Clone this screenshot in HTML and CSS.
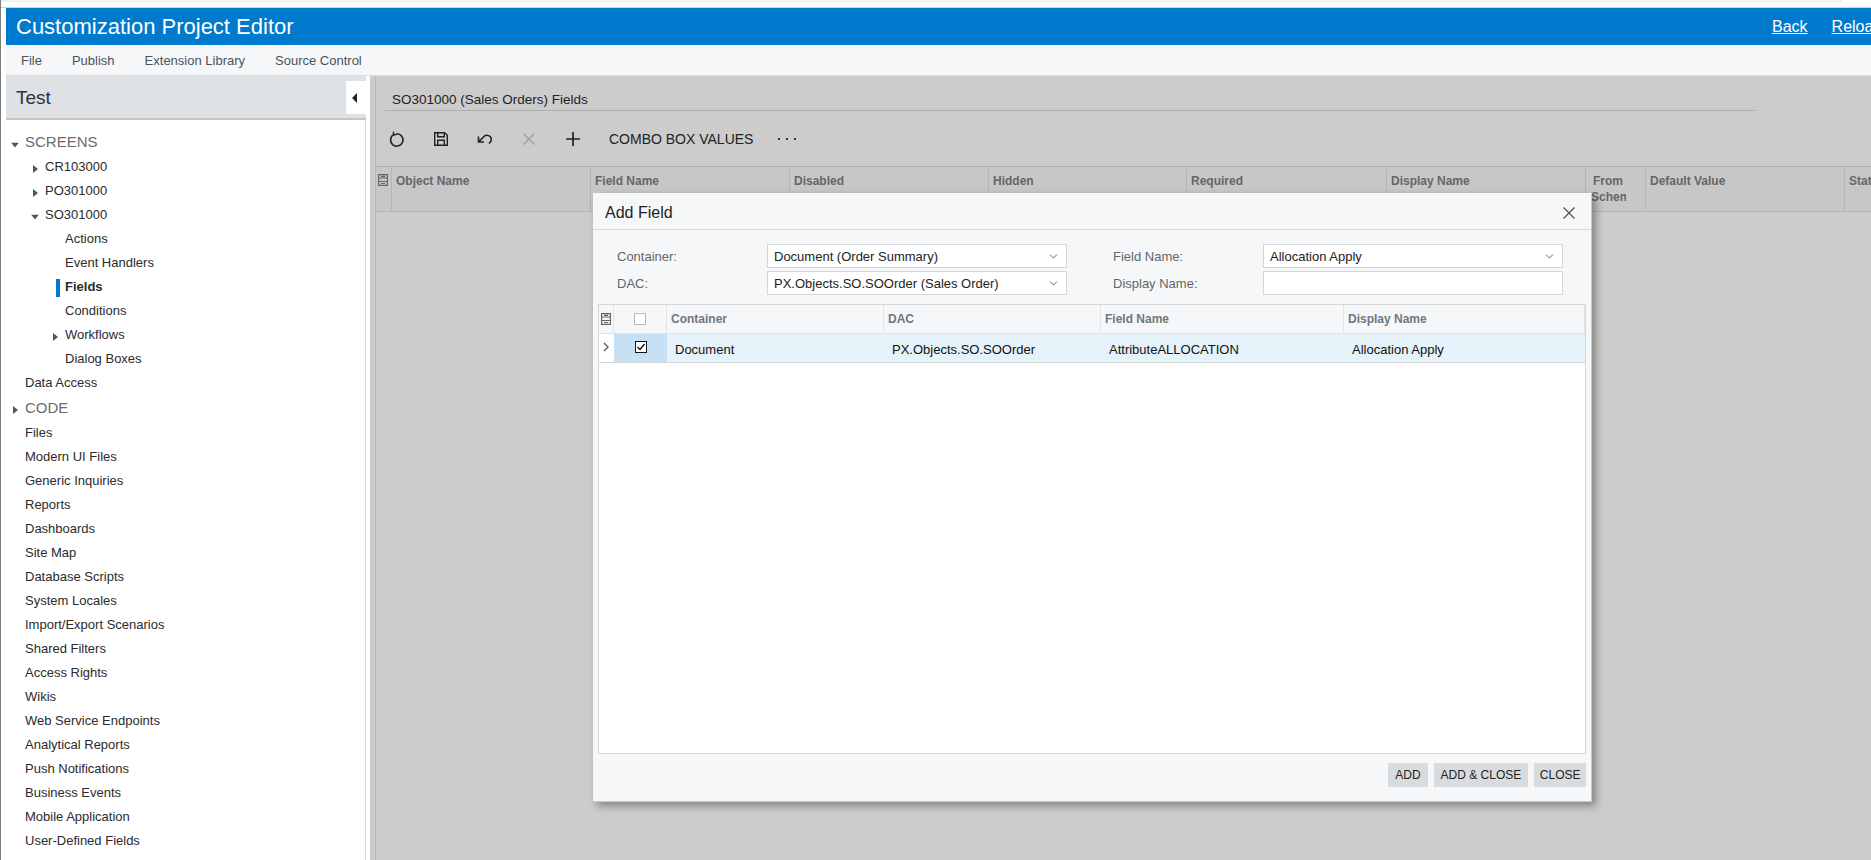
FILE: index.html
```html
<!DOCTYPE html>
<html lang="en">
<head>
<meta charset="utf-8">
<title>Customization Project Editor</title>
<link rel="stylesheet" href="styles.css">
</head>
<body>
<div class="chrome-top"></div>
<div class="page">
  <header class="topbar">
    <h1 class="app-title">Customization Project Editor</h1>
    <nav class="top-links"><a class="top-link">Back</a><a class="top-link">Reload</a></nav>
  </header>
  <nav class="menubar">
    <span class="menu-item">File</span>
    <span class="menu-item">Publish</span>
    <span class="menu-item">Extension Library</span>
    <span class="menu-item">Source Control</span>
  </nav>
  <div class="workspace">
    <aside class="sidebar">
      <div class="side-head">
        <span class="side-title">Test</span>
        <button class="collapse"><svg width="6" height="10" viewBox="0 0 6 10"><path d="M5 0v10L0 5z" fill="#222"/></svg></button>
      </div>
      <ul class="tree">
        <li class="node section l0"><svg class="caret" width="8" height="5" viewBox="0 0 8 5"><path d="M0 0h8L4 5z"/></svg>SCREENS</li>
        <li class="node l1"><svg class="caret caret-r" width="5" height="8" viewBox="0 0 5 8"><path d="M0 0v8l5-4z"/></svg>CR103000</li>
        <li class="node l1"><svg class="caret caret-r" width="5" height="8" viewBox="0 0 5 8"><path d="M0 0v8l5-4z"/></svg>PO301000</li>
        <li class="node l1"><svg class="caret" width="8" height="5" viewBox="0 0 8 5"><path d="M0 0h8L4 5z"/></svg>SO301000</li>
        <li class="node l2">Actions</li>
        <li class="node l2">Event Handlers</li>
        <li class="node l2 active">Fields</li>
        <li class="node l2">Conditions</li>
        <li class="node l2"><svg class="caret caret-r" width="5" height="8" viewBox="0 0 5 8"><path d="M0 0v8l5-4z"/></svg>Workflows</li>
        <li class="node l2">Dialog Boxes</li>
        <li class="node l0">Data Access</li>
        <li class="node section l0 code"><svg class="caret caret-r" width="5" height="8" viewBox="0 0 5 8"><path d="M0 0v8l5-4z"/></svg>CODE</li>
        <li class="node l0">Files</li>
        <li class="node l0">Modern UI Files</li>
        <li class="node l0">Generic Inquiries</li>
        <li class="node l0">Reports</li>
        <li class="node l0">Dashboards</li>
        <li class="node l0">Site Map</li>
        <li class="node l0">Database Scripts</li>
        <li class="node l0">System Locales</li>
        <li class="node l0">Import/Export Scenarios</li>
        <li class="node l0">Shared Filters</li>
        <li class="node l0">Access Rights</li>
        <li class="node l0">Wikis</li>
        <li class="node l0">Web Service Endpoints</li>
        <li class="node l0">Analytical Reports</li>
        <li class="node l0">Push Notifications</li>
        <li class="node l0">Business Events</li>
        <li class="node l0">Mobile Application</li>
        <li class="node l0">User-Defined Fields</li>
        <li class="node l0">Webhooks</li>
      </ul>
    </aside>
    <main class="main">
      <div class="main-inner">
        <div class="page-title">SO301000 (Sales Orders) Fields</div>
        <div class="toolbar">
          <svg class="tool" width="18" height="18" viewBox="0 0 18 18" fill="none" stroke="#222" stroke-width="1.6"><path d="M5.6 4.6a6.2 6.2 0 1 0 3-.9"/><path d="M5.4 1.6l.3 3.4 3.3-.7" stroke-width="1.4"/></svg>
          <svg class="tool" width="18" height="18" viewBox="0 0 18 18" fill="none" stroke="#222" stroke-width="1.4"><path d="M2.7 2.7h10l2.6 2.6v10H2.7z"/><path d="M5.7 2.7v4h6.6v-4M5.7 15.3v-5h6.6v5"/></svg>
          <svg class="tool" width="18" height="18" viewBox="0 0 18 18" fill="none" stroke="#222" stroke-width="1.6"><path d="M2.5 6.5v5.5H8M2.5 12L8 6.5a4.2 4.2 0 0 1 6 0 4.2 4.2 0 0 1 0 6l-1 1"/></svg>
          <svg class="tool" width="18" height="18" viewBox="0 0 18 18" fill="none" stroke="#9c9c9c" stroke-width="1.4"><path d="M3.5 3.5l11 11M14.5 3.5l-11 11"/></svg>
          <svg class="tool" width="18" height="18" viewBox="0 0 18 18" fill="none" stroke="#222" stroke-width="1.7"><path d="M9 2v14M2 9h14"/></svg>
          <span class="tool-text">COMBO BOX VALUES</span>
          <span class="tool-more"><i></i><i></i><i></i></span>
        </div>
        <div class="bg-grid">
          <div class="bg-col icon-col"><svg class="grid-icon" width="12" height="12" viewBox="0 0 12 12" fill="none" stroke="#666" stroke-width="1.2"><path d="M1.6.6h8.8v10.8H1.6zM1.6 4h8.8M1.6 7.5h8.8M4 2.3h4M4 9.5h4"/></svg></div>
          <div class="bg-col w199">Object Name</div>
          <div class="bg-col w199">Field Name</div>
          <div class="bg-col w199">Disabled</div>
          <div class="bg-col w198">Hidden</div>
          <div class="bg-col w200">Required</div>
          <div class="bg-col w199">Display Name</div>
          <div class="bg-col from"><div class="from-clip">From<br>Schema</div></div>
          <div class="bg-col w199">Default Value</div>
          <div class="bg-col last">Status</div>
        </div>
      </div>
    </main>
  </div>
</div>
<section class="dialog">
  <div class="dlg-head"><span class="dlg-title">Add Field</span>
    <svg width="14" height="14" viewBox="0 0 14 14" fill="none" stroke="#555" stroke-width="1.3"><path d="M1.5 1.5l11 11M12.5 1.5l-11 11"/></svg>
  </div>
  <div class="form">
    <label class="lbl">Container:</label>
    <div class="field">Document (Order Summary)<svg class="chev" width="9" height="5" viewBox="0 0 9 5" fill="none" stroke="#666"><path d="M1 .5l3.5 3.5L8 .5"/></svg></div>
    <label class="lbl lbl-right">Field Name:</label>
    <div class="field">Allocation Apply<svg class="chev" width="9" height="5" viewBox="0 0 9 5" fill="none" stroke="#666"><path d="M1 .5l3.5 3.5L8 .5"/></svg></div>
    <label class="lbl">DAC:</label>
    <div class="field">PX.Objects.SO.SOOrder (Sales Order)<svg class="chev" width="9" height="5" viewBox="0 0 9 5" fill="none" stroke="#666"><path d="M1 .5l3.5 3.5L8 .5"/></svg></div>
    <label class="lbl lbl-right">Display Name:</label>
    <div class="field"></div>
  </div>
  <div class="dlg-grid">
    <div class="dg-row dg-head">
      <div class="dg-cell"><svg width="12" height="12" viewBox="0 0 12 12" fill="none" stroke="#666" stroke-width="1.2"><path d="M1.6.6h8.8v10.8H1.6zM1.6 4h8.8M1.6 7.5h8.8M4 2.3h4M4 9.5h4"/></svg></div>
      <div class="dg-cell center"><span class="check"></span></div>
      <div class="dg-cell txt">Container</div>
      <div class="dg-cell txt">DAC</div>
      <div class="dg-cell txt">Field Name</div>
      <div class="dg-cell txt">Display Name</div>
    </div>
    <div class="dg-row dg-data">
      <div class="dg-cell arrow"><svg width="6" height="10" viewBox="0 0 6 10" fill="none" stroke="#666" stroke-width="1.5"><path d="M1 1l4 4-4 4"/></svg></div>
      <div class="dg-cell center sel"><span class="check on"><svg width="10" height="10" viewBox="0 0 10 10" fill="none" stroke="#111" stroke-width="1.4"><path d="M1.5 5l2.5 2.5L8.5 2"/></svg></span></div>
      <div class="dg-cell val">Document</div>
      <div class="dg-cell val">PX.Objects.SO.SOOrder</div>
      <div class="dg-cell val">AttributeALLOCATION</div>
      <div class="dg-cell val">Allocation Apply</div>
    </div>
  </div>
  <div class="dlg-foot">
    <button class="btn">ADD</button>
    <button class="btn">ADD &amp; CLOSE</button>
    <button class="btn btn-narrow">CLOSE</button>
  </div>
</section>
</body>
</html>
```
FILE: styles.css
```css
* { box-sizing: border-box; }
html, body { margin: 0; height: 100%; overflow: hidden; }
body {
  position: relative;
  width: 1871px;
  height: 860px;
  background: #fff;
  font-family: "Liberation Sans", Arial, sans-serif;
  font-size: 13px;
  color: #222;
  border-left: 1px solid #7d7d7d;
}
.chrome-top {
  height: 8px;
  margin-left: -1px;
  border-bottom: 1px solid #c9d3dc;
  background: linear-gradient(#f1f1f1, #f1f1f1) no-repeat 0 0 / 1842px 2px, #fff;
}
.page { margin-left: 5px; height: 852px; display: flex; flex-direction: column; }
.topbar {
  height: 37px;
  flex: none;
  background: #007acc;
  color: #fff;
  display: flex;
  align-items: center;
  justify-content: space-between;
  padding-left: 10px;
  overflow: hidden;
}
.app-title { margin: 0; font-size: 22px; font-weight: 400; }
.top-links { display: flex; gap: 24px; width: 99px; flex: none; white-space: nowrap; }
.top-link { font-size: 16px; text-decoration: underline; color: #fff; }
.menubar {
  height: 31px;
  flex: none;
  background: #f5f7f9;
  display: flex;
  align-items: center;
  gap: 30px;
  padding-left: 15px;
  color: #4c5258;
  font-size: 13px;
  border-bottom: 1px solid #dcdcdc;
}
.workspace { flex: 1; display: flex; min-height: 0; }
.sidebar { width: 364px; flex: none; background: #fff; display: flex; flex-direction: column; overflow: hidden; padding-right: 4px; }
.side-head {
  height: 44px;
  flex: none;
  background: #dfe2e5;
  border-bottom: 2px solid #c4c7ca;
  display: flex;
  align-items: center;
  justify-content: space-between;
  padding-left: 10px;
}
.side-title { font-size: 19px; color: #333; padding-top: 1px; }
.collapse {
  width: 20px;
  height: 33px;
  border: 0;
  background: #fff;
  display: flex;
  align-items: center;
  justify-content: flex-start;
  margin-top: 1px;
  padding: 0 0 0 6px;
}
.tree {
  list-style: none;
  margin: 0;
  padding: 11px 0 0;
  flex: 1;
  border-right: 1px solid #d6d6d6;
}
.node { height: 24px; line-height: 24px; position: relative; white-space: nowrap; color: #2b2b2b; }
.l0 { padding-left: 19px; }
.l1 { padding-left: 39px; }
.l2 { padding-left: 59px; }
.section { font-size: 15px; color: #6b6b6b; line-height: 22px; }
.code { height: 26px; line-height: 26px; }
.caret { position: absolute; top: calc(50% + 1.5px); transform: translateY(-50%); fill: #555; }
.l0 .caret { left: 5px; }
.l1 .caret { left: 25px; }
.l2 .caret { left: 46px; }
.caret-r { margin-left: 2px; }
.l2 .caret-r { margin-left: 1px; }
.active { font-weight: 700; }
.active::before { content: ""; position: absolute; left: 50px; top: 4px; width: 4px; height: 18px; background: #007acc; }
.main { flex: 1; min-width: 0; background: #cccccc; padding-left: 5px; overflow: hidden; }
.main-inner { border-left: 1px solid #b9b9b9; height: 100%; }
.page-title { margin-left: 9px; width: 1370px; height: 35px; padding: 16px 0 0 7px; font-size: 13.5px; line-height: 16px; color: #222; border-bottom: 1px solid #aeaeae; }
.toolbar { height: 55px; display: flex; align-items: center; padding-left: 12px; }
.tool { flex: none; margin-right: 26px; }
.tool-text { margin-left: 1px; font-size: 14px; color: #222; }
.tool-more { display: flex; gap: 6px; margin-left: 25px; }
.tool-more i { width: 2px; height: 2px; background: #333; }
.bg-grid {
  display: flex;
  height: 46px;
  border-top: 1px solid #b3b3b3;
  border-bottom: 1px solid #b3b3b3;
  background: #c6c7c6;
  font-size: 12px;
  font-weight: 700;
  line-height: 16px;
  color: #666;
  width: 1600px;
}
.bg-col { padding: 6px 4px 0; border-right: 1px solid #b5b5b5; flex: none; overflow: hidden; white-space: nowrap; }
.icon-col { width: 16px; padding: 7px 0 0 1px; }
.grid-icon { display: block; }
.w200 { width: 200px; }
.w199 { width: 199px; }
.w198 { width: 198px; }
.from { width: 60px; padding-left: 5px; }
.from-clip { width: 35px; overflow: hidden; text-indent: 2px; }
.last { width: 100px; border-right: 0; }
.dialog {
  position: absolute;
  left: 592px;
  top: 193px;
  width: 999px;
  height: 609px;
  background: #f5f7f9;
  border-right: 1px solid #c9c9c9;
  border-bottom: 1px solid #c9c9c9;
  box-shadow: 4px 4px 8px rgba(0,0,0,.35);
  display: flex;
  flex-direction: column;
}
.dlg-head {
  height: 37px;
  flex: none;
  display: flex;
  align-items: center;
  justify-content: space-between;
  padding: 4px 15px 0 12px;
  border-bottom: 1px solid #d5d9dc;
}
.dlg-title { font-size: 16px; color: #222; }
.form {
  display: grid;
  grid-template-columns: 150px 300px 196px 300px;
  grid-auto-rows: 24px;
  row-gap: 3px;
  padding: 14px 0 0 24px;
  height: 74px;
  flex: none;
  font-size: 13px;
}
.lbl { line-height: 25px; color: #666; }
.lbl-right { margin-left: 46px; }
.field {
  position: relative;
  background: #fff;
  border: 1px solid #d3d7da;
  line-height: 23px;
  padding-left: 6px;
  color: #222;
  white-space: nowrap;
}
.chev { position: absolute; right: 8px; top: 9px; }
.dlg-grid {
  margin: 0 5px;
  height: 450px;
  flex: none;
  background: #fff;
  border: 1px solid #d3d7da;
}
.dg-row { display: grid; grid-template-columns: 15px 53px 217px 217px 243px 1fr; }
.dg-head { height: 29px; background: #f5f7f9; border-bottom: 1px solid #dfe3e6; font-size: 12px; font-weight: 700; color: #71777c; }
.dg-data { height: 29px; background: #e6f2fa; border-bottom: 1px solid #d3d7da; font-size: 13px; color: #111; }
.dg-cell { display: flex; align-items: center; min-width: 0; white-space: nowrap; border-right: 1px solid #e2e5e8; }
.dg-head .dg-cell:first-child { padding-left: 1px; }
.dg-data .dg-cell { border-right: 0; }
.txt { padding-left: 4px; }
.val { padding: 2px 0 0 8px; }
.center { justify-content: center; }
.arrow { padding: 0 0 3px 4px; background: #fff; }
.sel { background: #c7e1f4; align-items: flex-start; padding-top: 7px; }
.check { width: 12px; height: 12px; background: #fff; border: 1px solid #bbb; display: block; }
.check.on { border-color: #111; display: flex; align-items: center; justify-content: center; }
.dlg-foot { display: flex; justify-content: flex-end; gap: 6px; padding: 9px 5px 0 0; }
.btn {
  height: 24px;
  border: 0;
  background: #d9dcde;
  padding: 0 7px;
  font-family: inherit;
  font-size: 12px;
  color: #222;
}
.btn-narrow { padding: 0 5.5px; }
```
